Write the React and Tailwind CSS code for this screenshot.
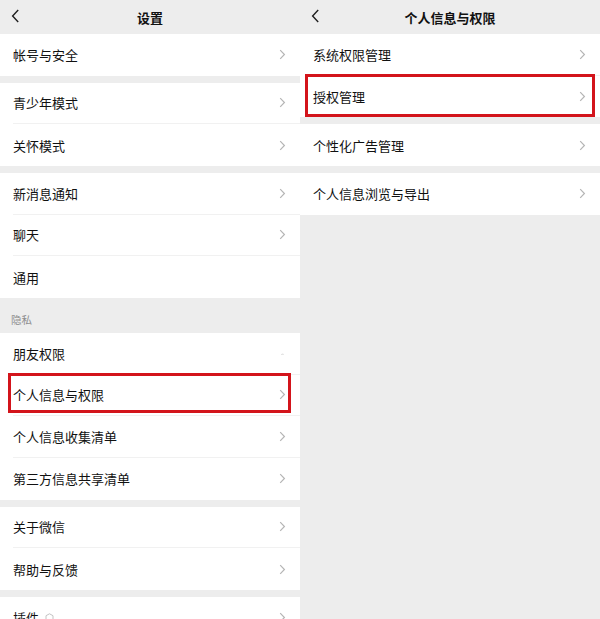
import React from "react";

const font = { fontFamily: '"Noto Sans CJK SC", "Noto Sans", sans-serif' };

function Chevron() {
  return (
    <svg width="7" height="11" viewBox="0 0 7 11" className="shrink-0">
      <path d="M1.2 1.2 L5.4 5.5 L1.2 9.8" fill="none" stroke="#b5b5b5" strokeWidth="1.2" />
    </svg>
  );
}

function Back() {
  return (
    <svg width="9" height="14" viewBox="0 0 9 14" className="shrink-0">
      <path d="M7.2 1 L1.6 7 L7.2 13" fill="none" stroke="#1f1f1f" strokeWidth="1.4" />
    </svg>
  );
}

function Header({ title }) {
  return (
    <div className="relative shrink-0 h-[34px] flex items-center justify-center bg-[#ededed]">
      <div className="absolute left-[11px] top-[9px]">
        <Back />
      </div>
      <span className="text-[13px] font-bold text-[#111] leading-none">{title}</span>
    </div>
  );
}

function Row({ label, last, arrow = true, mark, box, extra }) {
  return (
    <div className="relative shrink-0 h-[41.67px] bg-white pl-[13px]">
      <div className={"h-full flex items-center pr-[14px] " + (last ? "" : "border-b border-[#f1f1f1]")}>
        <span className="flex-1 flex items-center text-[13px] text-[#111] leading-none">
          {label}
          {extra}
        </span>
        {arrow && <Chevron />}
        {mark && (
          <svg width="7" height="11" viewBox="0 0 7 11" className="shrink-0">
            <path d="M2.5 7 L3.6 5.8 L4.4 6.6" fill="none" stroke="#c8c8c8" strokeWidth="0.9" />
          </svg>
        )}
      </div>
      {box}
    </div>
  );
}

function Gap() {
  return <div className="shrink-0 h-[7px] bg-[#ededed]" />;
}

export default function App() {
  return (
    <div className="w-[600px] h-[619px] overflow-hidden flex bg-[#ededed]" style={font}>
      {/* left panel */}
      <div className="w-[300px] h-full overflow-hidden flex flex-col shrink-0">
        <Header title="设置" />
        <Row label="帐号与安全" last />
        <Gap />
        <Row label="青少年模式" />
        <Row label="关怀模式" last />
        <Gap />
        <Row label="新消息通知" />
        <Row label="聊天" />
        <Row label="通用" last arrow={false} />
        <div className="shrink-0 h-[35px] bg-[#ededed] pl-[11px] pt-[17px]">
          <span className="text-[10.5px] text-[#8e8e8e] leading-none block">隐私</span>
        </div>
        <Row label="朋友权限" arrow={false} mark />
        <Row
          label="个人信息与权限"
          box={<div className="absolute left-[8px] right-[9px] top-[-2px] bottom-[3px] border-[3px] border-[#d3141b] pointer-events-none" />}
        />
        <Row label="个人信息收集清单" />
        <Row label="第三方信息共享清单" last />
        <Gap />
        <Row label="关于微信" />
        <Row label="帮助与反馈" last />
        <Gap />
        <Row
          label="插件"
          last
          extra={
            <svg width="9" height="9" viewBox="0 0 9 9" className="ml-[6px]">
              <path d="M4.5 0.8 L8 2.7 L8 6.3 L4.5 8.2 L1 6.3 L1 2.7 Z" fill="none" stroke="#bdbdbd" strokeWidth="0.9" />
            </svg>
          }
        />
      </div>
      {/* right panel */}
      <div className="w-[300px] h-full overflow-hidden flex flex-col shrink-0">
        <Header title="个人信息与权限" />
        <Row label="系统权限管理" />
        <Row
          label="授权管理"
          last
          box={<div className="absolute left-[5px] right-[5px] top-[-2px] bottom-[0px] border-[3px] border-[#d3141b] pointer-events-none" />}
        />
        <Gap />
        <Row label="个性化广告管理" last />
        <Gap />
        <Row label="个人信息浏览与导出" last />
      </div>
    </div>
  );
}
